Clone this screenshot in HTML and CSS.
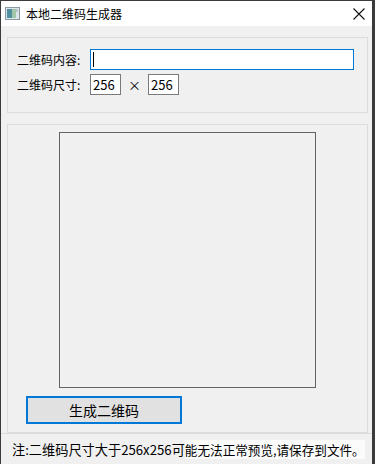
FILE: index.html
```html
<!DOCTYPE html>
<html lang="zh">
<head>
<meta charset="utf-8">
<link rel="stylesheet" href="styles.css">
</head>
<body>
<div class="window">
  <div class="titlebar">
    <svg class="appicon" width="15" height="13" viewBox="0 0 15 13">
      <rect x="0.5" y="0.5" width="14" height="12" fill="#dfe6ea" stroke="#8a9aa4"/>
      <rect x="2" y="2" width="5" height="9" fill="#4f8fa0"/>
      <rect x="7" y="2" width="4" height="9" fill="#9fc7a8"/>
      <rect x="11" y="2" width="2" height="3" fill="#b8c4ca"/>
    </svg>
    <span class="title">本地二维码生成器</span>
    <svg class="close" width="12" height="12" viewBox="0 0 12 12">
      <path d="M0.5 0.5 L11.5 11.5 M11.5 0.5 L0.5 11.5" stroke="#111" stroke-width="1.1"/>
    </svg>
  </div>
  <div class="content">
    <div class="group settings">
      <div class="row">
        <span class="label">二维码内容:</span>
        <div class="input text focus"><span class="caret"></span></div>
      </div>
      <div class="row">
        <span class="label">二维码尺寸:</span>
        <div class="input num">256</div>
        <span class="times">×</span>
        <div class="input num">256</div>
      </div>
    </div>
    <div class="group previewgroup">
      <div class="preview"></div>
      <div class="btn">生成二维码</div>
    </div>
  </div>
  <div class="status">
    <span>注:二维码尺寸大于256x256可</span><span class="tail">能无法正常预览,请保存到文件。</span>
  </div>
</div>
</body>
</html>
```

FILE: styles.css
```css
html, body {
  margin: 0;
  padding: 0;
}
body {
  background: #3b3b3b;
  width: 375px;
  height: 464px;
  overflow: hidden;
  font-family: "Noto Sans CJK SC", "Noto Sans", sans-serif;
  color: #000;
}
.window {
  margin: 1px 0 0 1px;
  width: 371px;
  height: 463px;
  background: #f0f0f0;
  display: flex;
  flex-direction: column;
}
.titlebar {
  height: 25px;
  background: #ffffff;
  display: flex;
  align-items: center;
  padding-left: 4px;
  flex-shrink: 0;
}
.appicon {
  margin-right: 6px;
}
.title {
  font-size: 12px;
  line-height: 14px;
  flex: 1;
}
.close {
  margin-right: 7px;
}
.content {
  flex: 1;
  padding: 11px 4px 0 6px;
  display: flex;
  flex-direction: column;
  gap: 11px;
}
.group {
  border: 1px solid #dcdcdc;
  box-sizing: border-box;
}
.settings {
  height: 76px;
  padding: 11px 0 0 9px;
  display: flex;
  flex-direction: column;
  gap: 4px;
}
.row {
  display: flex;
  align-items: center;
  height: 21px;
}
.label {
  font-size: 12px;
  width: 73px;
}
.input {
  box-sizing: border-box;
  height: 21px;
  background: #fff;
  border: 1px solid #7a7a7a;
  font-size: 13px;
  line-height: 19px;
  padding-left: 2px;
}
.input.text {
  width: 264px;
  display: flex;
  align-items: center;
  padding-left: 2px;
}
.input.focus {
  border-color: #0078d7;
}
.caret {
  width: 1px;
  height: 15px;
  background: #000;
}
.input.num {
  width: 31px;
}
.times {
  width: 27px;
  text-align: center;
  font-size: 13px;
}
.previewgroup {
  height: 309px;
  padding: 7px 0 0 18px;
  display: flex;
  flex-direction: column;
}
.preview {
  box-sizing: border-box;
  width: 257px;
  height: 256px;
  border: 1px solid #646464;
  margin-left: 33px;
}
.btn {
  box-sizing: border-box;
  margin-top: 8px;
  width: 156px;
  height: 28px;
  border: 2px solid #0078d7;
  background: #e1e1e1;
  font-size: 14px;
  display: flex;
  align-items: center;
  justify-content: center;
}
.status {
  height: 31px;
  flex-shrink: 0;
  border-top: 1px solid #dadada;
  box-sizing: border-box;
  display: flex;
  align-items: center;
  padding-left: 11px;
  font-size: 13.2px;
  white-space: nowrap;
  overflow: hidden;
}
.tail {
  background: #fbfbfb;
  font-size: 12.6px;
}
```
